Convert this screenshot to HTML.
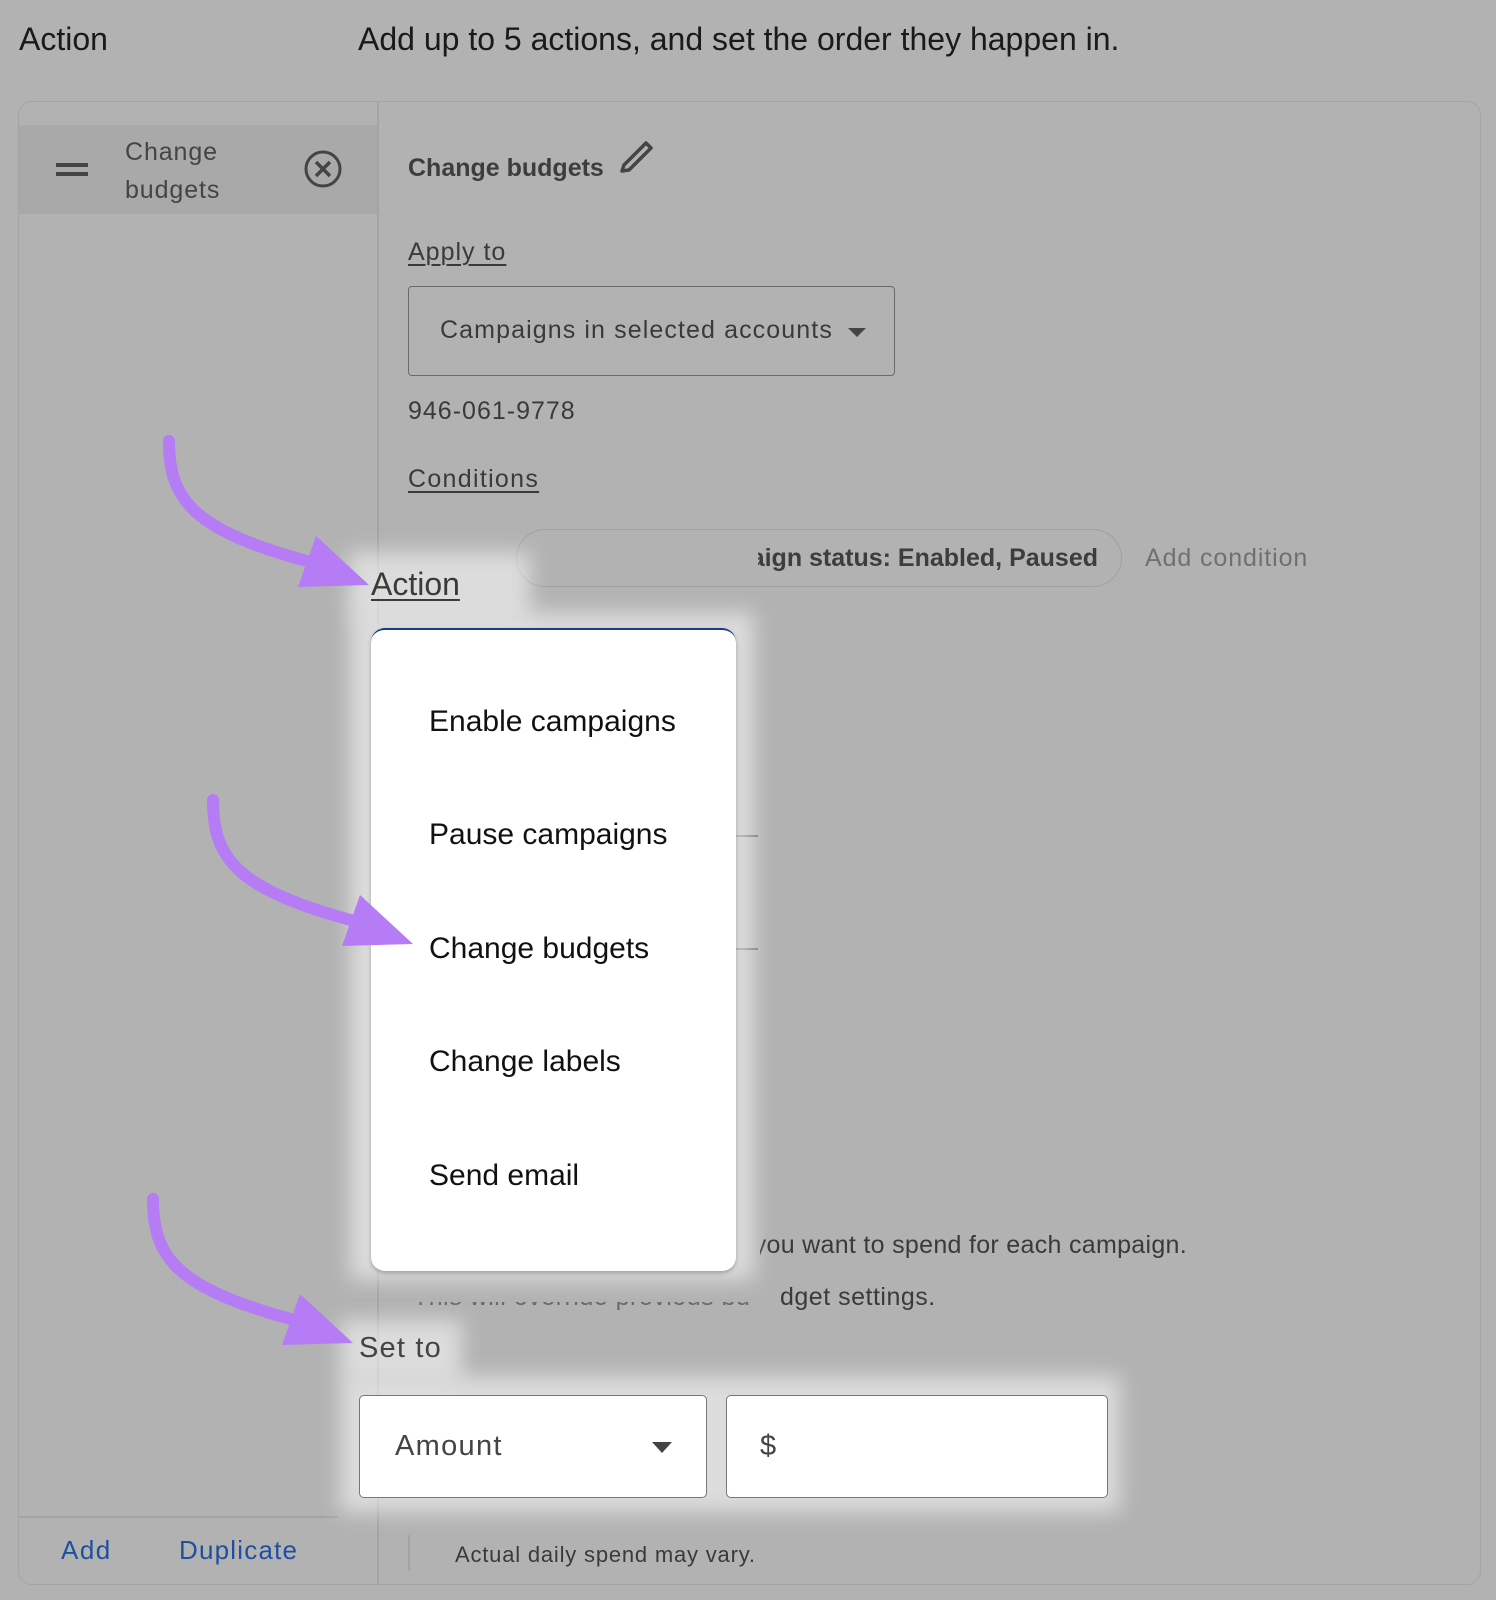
<!DOCTYPE html>
<html><head><meta charset="utf-8"><style>
*{margin:0;padding:0;box-sizing:border-box}
body{width:1496px;height:1600px;background:#b2b2b2;font-family:"Liberation Sans",sans-serif;position:relative;overflow:hidden;color:#3a3a3a}
.a{position:absolute;white-space:nowrap}
.card{position:absolute;left:18px;top:101px;width:1463px;height:1484px;border:1.5px solid #a4a4a4;border-radius:14px}
.u{text-decoration:underline;text-decoration-thickness:1.5px;text-underline-offset:4px}
.glow{position:absolute;background:#fff;filter:blur(10px);opacity:.55}
.clipr{position:absolute;overflow:hidden;white-space:nowrap}
.clipr span{position:absolute;right:0;top:0}
</style></head><body>
<div class="a" style="left:19px;top:21px;font-size:32px;color:#1a1a1a">Action</div>
<div class="a" style="left:358px;top:21px;font-size:32px;color:#1a1a1a">Add up to 5 actions, and set the order they happen in.</div>
<div class="card"></div>
<div class="a" style="left:19px;top:125px;width:359px;height:89px;background:#a9a9a9"></div>
<div class="a" style="left:377px;top:102px;width:1.5px;height:1482px;background:#a4a4a4"></div>
<div class="a" style="left:56px;top:163px;width:32px;height:4px;background:#444"></div>
<div class="a" style="left:56px;top:172px;width:32px;height:4px;background:#444"></div>
<div class="a" style="left:125px;top:133px;font-size:25px;line-height:38px;color:#444;letter-spacing:0.9px">Change<br>budgets</div>
<svg class="a" style="left:303px;top:149px" width="40" height="40" viewBox="0 0 40 40"><circle cx="20" cy="20" r="17" fill="none" stroke="#444" stroke-width="3"/><path d="M13 13L27 27M27 13L13 27" stroke="#444" stroke-width="3.5"/></svg>
<div class="a" style="left:408px;top:154px;font-size:25px;font-weight:bold;color:#3d3d3d">Change budgets</div>
<svg class="a" style="left:618px;top:137px" width="38" height="36" viewBox="0 0 38 36"><path d="M6 28L28 6L33 11L11 33L4 34Z" fill="none" stroke="#444" stroke-width="3.5" stroke-linejoin="round"/></svg>
<div class="a u" style="left:408px;top:238px;font-size:25px;letter-spacing:1px">Apply to</div>
<div class="a" style="left:408px;top:286px;width:487px;height:90px;border:1.5px solid #6a6a6a;border-radius:4px"></div>
<div class="a" style="left:440px;top:316px;font-size:25px;letter-spacing:1.1px">Campaigns in selected accounts</div>
<div class="a" style="left:848px;top:328px;border-left:9px solid transparent;border-right:9px solid transparent;border-top:9px solid #444"></div>
<div class="a" style="left:408px;top:397px;font-size:25px;letter-spacing:1px">946-061-9778</div>
<div class="a u" style="left:408px;top:465px;font-size:25px;letter-spacing:1.3px">Conditions</div>
<div class="a" style="left:516px;top:529px;width:606px;height:58px;border:1.5px solid #a0a0a0;border-radius:29px"></div>
<div class="clipr" style="left:758px;top:544px;width:340px;height:32px;font-size:25px;font-weight:bold;color:#3d3d3d"><span>Campaign status: Enabled, Paused</span></div>
<div class="a" style="left:1145px;top:544px;font-size:25px;color:#707070;letter-spacing:0.9px">Add condition</div>
<div class="a" style="left:736px;top:835px;width:22px;height:1.5px;background:#707070"></div>
<div class="a" style="left:736px;top:948px;width:22px;height:1.5px;background:#707070"></div>
<div class="clipr" style="left:760px;top:1231px;width:427px;height:32px;font-size:25px;letter-spacing:0.3px"><span>If you want to spend for each campaign.</span></div>
<div class="a" style="left:780px;top:1283px;font-size:25px;letter-spacing:0.5px">dget settings.</div>
<div class="clipr" style="left:413px;top:1302px;width:365px;height:10px;font-size:25px;letter-spacing:0.5px;opacity:.6"><span style="top:-19px;left:0;right:auto">This will override previous bu</span></div>
<div class="a" style="left:19px;top:1516px;width:319px;height:1.5px;background:#a4a4a4"></div>
<div class="a" style="left:61px;top:1535px;font-size:26px;color:#1f4fa0;letter-spacing:1.5px">Add</div>
<div class="a" style="left:179px;top:1535px;font-size:26px;color:#1f4fa0;letter-spacing:1.2px">Duplicate</div>
<div class="a" style="left:408px;top:1535px;width:1.5px;height:36px;background:#a4a4a4"></div>
<div class="a" style="left:455px;top:1542px;font-size:22px;color:#3a3a3a;letter-spacing:0.8px">Actual daily spend may vary.</div>
<!-- glows -->
<div class="glow" style="left:348px;top:552px;width:182px;height:64px"></div>
<div class="glow" style="left:350px;top:612px;width:404px;height:668px"></div>
<div class="glow" style="left:340px;top:1320px;width:122px;height:58px"></div>
<div class="glow" style="left:340px;top:1376px;width:780px;height:136px"></div>
<div class="a u" style="left:371px;top:566px;font-size:32px;color:#3a3a3a">Action</div>
<div class="a" style="left:371px;top:628px;width:365px;height:643px;background:#fff;border-radius:14px;box-shadow:0 2px 4px rgba(0,0,0,.25);border-top:2px solid #1a3a8a"></div>
<div class="a" style="left:429px;top:705px;font-size:30px;color:#111">Enable campaigns</div>
<div class="a" style="left:429px;top:818px;font-size:30px;color:#111">Pause campaigns</div>
<div class="a" style="left:429px;top:932px;font-size:30px;color:#111">Change budgets</div>
<div class="a" style="left:429px;top:1045px;font-size:30px;color:#111">Change labels</div>
<div class="a" style="left:429px;top:1159px;font-size:30px;color:#111">Send email</div>
<div class="a" style="left:359px;top:1332px;font-size:29px;color:#444;letter-spacing:1.2px">Set to</div>
<div class="a" style="left:359px;top:1395px;width:348px;height:103px;background:#fff;border:1.5px solid #777;border-radius:5px"></div>
<div class="a" style="left:395px;top:1430px;font-size:29px;color:#444;letter-spacing:1.3px">Amount</div>
<div class="a" style="left:652px;top:1442px;border-left:10px solid transparent;border-right:10px solid transparent;border-top:11px solid #444"></div>
<div class="a" style="left:726px;top:1395px;width:382px;height:103px;background:#fff;border:1.5px solid #777;border-radius:5px"></div>
<div class="a" style="left:760px;top:1430px;font-size:29px;color:#444">$</div>
<!-- arrows -->
<svg class="a" style="left:0;top:0" width="1496" height="1600" viewBox="0 0 1496 1600">
<g fill="#b57cf5" stroke="#b57cf5">
<g transform="translate(169,441)"><path d="M0 0C0 60 25 90 145 122" fill="none" stroke-width="12" stroke-linecap="round"/><path d="M129 146L147 95L200 144Z" stroke="none"/></g>
<g transform="translate(213,800)"><path d="M0 0C0 60 25 90 145 122" fill="none" stroke-width="12" stroke-linecap="round"/><path d="M129 146L147 95L200 144Z" stroke="none"/></g>
<g transform="translate(153,1199)"><path d="M0 0C0 60 25 90 145 122" fill="none" stroke-width="12" stroke-linecap="round"/><path d="M129 146L147 95L200 144Z" stroke="none"/></g>
</g></svg>
</body></html>
